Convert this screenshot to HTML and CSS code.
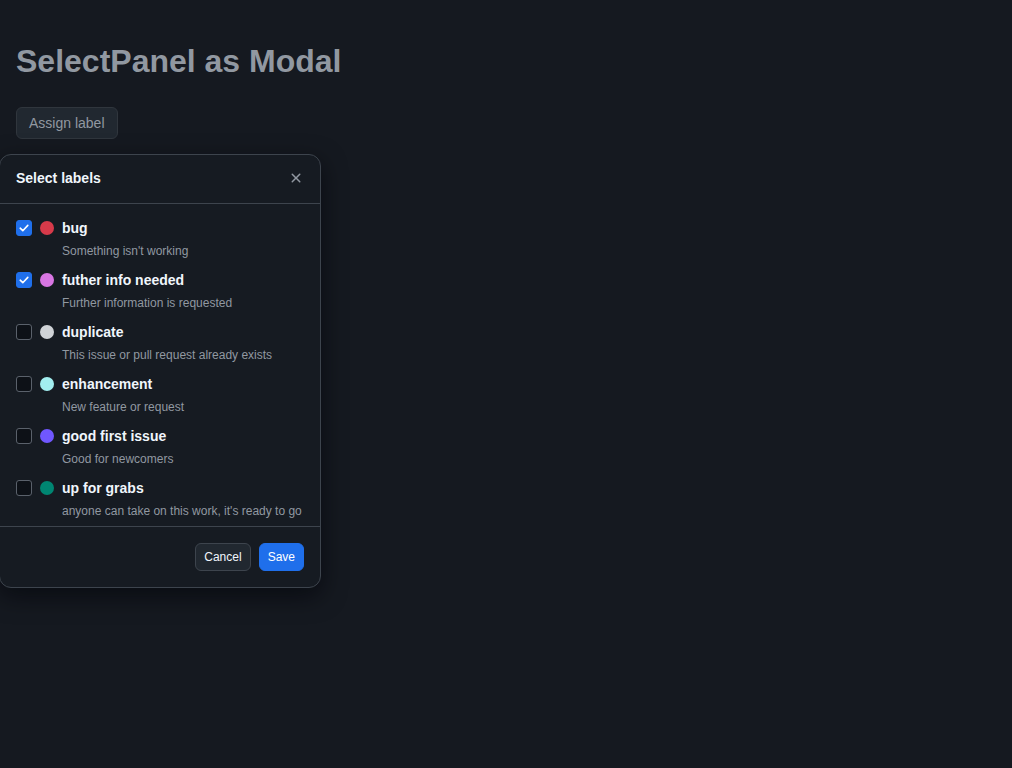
FILE: index.html
```html
<!DOCTYPE html>
<html lang="en">
<head>
<meta charset="utf-8">
<title>SelectPanel as Modal</title>
<link rel="stylesheet" href="styles.css">
</head>
<body>
<main class="page">
  <h1 class="title">SelectPanel as Modal</h1>
  <button class="btn">Assign label</button>
</main>

<div class="panel" role="dialog" aria-label="Select labels">
  <header class="panel-header">
    <h2 class="panel-title">Select labels</h2>
    <button class="close" aria-label="Close">
      <svg width="16" height="16" viewBox="0 0 16 16" fill="currentColor"><path d="M3.72 3.72a.75.75 0 0 1 1.06 0L8 6.94l3.22-3.22a.749.749 0 0 1 1.275.326.749.749 0 0 1-.215.734L9.06 8l3.22 3.22a.749.749 0 0 1-.326 1.275.749.749 0 0 1-.734-.215L8 9.06l-3.22 3.22a.751.751 0 0 1-1.042-.018.751.751 0 0 1-.018-1.042L6.94 8 3.72 4.78a.75.75 0 0 1 0-1.06Z"/></svg>
    </button>
  </header>
  <ul class="list">
    <li class="item">
      <span class="check checked"><svg width="12" height="12" viewBox="0 0 12 12"><path d="M2.2 6.2 4.8 8.7 9.8 3.4" fill="none" stroke="#fff" stroke-width="1.6" stroke-linecap="round" stroke-linejoin="round"/></svg></span>
      <span class="dot dot-bug"></span>
      <div class="text"><div class="name">bug</div><div class="desc">Something isn't working</div></div>
    </li>
    <li class="item">
      <span class="check checked"><svg width="12" height="12" viewBox="0 0 12 12"><path d="M2.2 6.2 4.8 8.7 9.8 3.4" fill="none" stroke="#fff" stroke-width="1.6" stroke-linecap="round" stroke-linejoin="round"/></svg></span>
      <span class="dot dot-info"></span>
      <div class="text"><div class="name">futher info needed</div><div class="desc">Further information is requested</div></div>
    </li>
    <li class="item">
      <span class="check"></span>
      <span class="dot dot-dup"></span>
      <div class="text"><div class="name">duplicate</div><div class="desc">This issue or pull request already exists</div></div>
    </li>
    <li class="item">
      <span class="check"></span>
      <span class="dot dot-enh"></span>
      <div class="text"><div class="name">enhancement</div><div class="desc">New feature or request</div></div>
    </li>
    <li class="item">
      <span class="check"></span>
      <span class="dot dot-gfi"></span>
      <div class="text"><div class="name">good first issue</div><div class="desc">Good for newcomers</div></div>
    </li>
    <li class="item">
      <span class="check"></span>
      <span class="dot dot-ufg"></span>
      <div class="text"><div class="name">up for grabs</div><div class="desc">anyone can take on this work, it's ready to go</div></div>
    </li>
  </ul>
  <footer class="panel-footer">
    <button class="sbtn">Cancel</button>
    <button class="sbtn primary">Save</button>
  </footer>
</div>
</body>
</html>
```
FILE: styles.css
```css
* { box-sizing: border-box; }
html, body { margin: 0; }
body {
  background: #151920;
  color: #f0f6fc;
  font-family: "Liberation Sans", Arial, sans-serif;
  min-height: 768px;
}
.page {
  padding: 16px;
  display: flex;
  flex-direction: column;
  align-items: flex-start;
}
.title {
  margin: 25px 0 26px;
  font-size: 32px;
  line-height: 40px;
  font-weight: 700;
  color: #9198a1;
}
.btn {
  height: 32px;
  padding: 0 12px;
  font-family: inherit;
  font-size: 14px;
  color: #9198a1;
  background: #212830;
  border: 1px solid #30363d;
  border-radius: 6px;
}
.panel {
  position: absolute;
  left: -1px;
  top: 154px;
  width: 322px;
  background: #161b22;
  border: 1px solid #3d444d;
  border-radius: 12px;
  box-shadow: 0 8px 24px rgba(1, 4, 9, 0.6);
  display: flex;
  flex-direction: column;
}
.panel-header {
  height: 49px;
  padding: 0 8px 2px 16px;
  display: flex;
  align-items: center;
  justify-content: space-between;
  border-bottom: 1px solid #3d444d;
}
.panel-title {
  margin: 0;
  font-size: 14px;
  font-weight: 700;
  color: #f0f6fc;
}
.close {
  width: 32px;
  height: 32px;
  background: none;
  border: 0;
  padding: 0;
  color: #9198a1;
  display: flex;
  align-items: center;
  justify-content: center;
  margin-top: 0;
}
.list {
  list-style: none;
  margin: 0;
  padding: 8px 0 2px;
}
.item {
  height: 52px;
  padding: 6px 16px 0;
  display: flex;
  align-items: flex-start;
}
.check {
  width: 16px;
  height: 16px;
  margin-top: 2px;
  border: 1px solid #5a616b;
  border-radius: 3px;
  background: #0d1117;
  display: flex;
  align-items: center;
  justify-content: center;
  flex: none;
}
.check.checked {
  background: #1f6feb;
  border-color: #1f6feb;
}
.dot {
  width: 14px;
  height: 14px;
  border-radius: 50%;
  margin: 3px 8px 0 8px;
  flex: none;
}
.dot-bug { background: #d73a4a; }
.dot-info { background: #d876e3; }
.dot-dup { background: #cfd3d7; }
.dot-enh { background: #a2eeef; }
.dot-gfi { background: #7057ff; }
.dot-ufg { background: #008672; }
.name {
  font-size: 14px;
  line-height: 20px;
  font-weight: 700;
  color: #f0f6fc;
}
.desc {
  margin-top: 4px;
  font-size: 12px;
  line-height: 18px;
  color: #9198a1;
  white-space: nowrap;
}
.panel-footer {
  border-top: 1px solid #3d444d;
  padding: 16px 16px 16px;
  display: flex;
  justify-content: flex-end;
  gap: 8px;
}
.sbtn {
  height: 28px;
  padding: 0 8px;
  font-family: inherit;
  font-size: 12px;
  color: #f0f6fc;
  background: #212830;
  border: 1px solid #3d444d;
  border-radius: 6px;
}
.sbtn.primary {
  background: #1f6feb;
  border-color: #1f6feb;
  color: #fff;
}
```
